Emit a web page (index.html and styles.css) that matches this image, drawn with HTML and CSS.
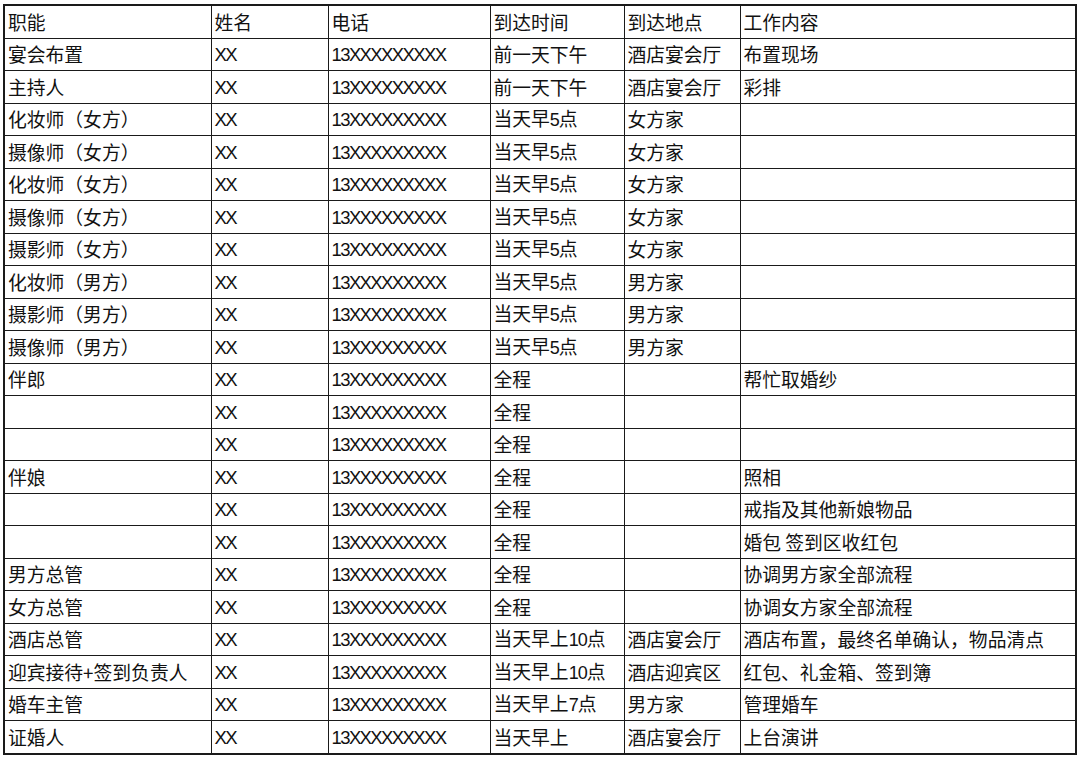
FILE: index.html
```html
<!DOCTYPE html>
<html lang="zh">
<head>
<meta charset="utf-8">
<title>婚礼人员安排</title>
<link rel="stylesheet" href="styles.css">
</head>
<body>
<table class="sheet">
  <colgroup>
    <col class="c1"><col class="c2"><col class="c3"><col class="c4"><col class="c5"><col class="c6">
  </colgroup>
  <tbody>
    <tr><td>职能</td><td>姓名</td><td>电话</td><td>到达时间</td><td>到达地点</td><td>工作内容</td></tr>
    <tr><td>宴会布置</td><td><span class="l">XX</span></td><td><span class="l">13XXXXXXXXX</span></td><td>前一天下午</td><td>酒店宴会厅</td><td>布置现场</td></tr>
    <tr><td>主持人</td><td><span class="l">XX</span></td><td><span class="l">13XXXXXXXXX</span></td><td>前一天下午</td><td>酒店宴会厅</td><td>彩排</td></tr>
    <tr><td>化妆师（女方）</td><td><span class="l">XX</span></td><td><span class="l">13XXXXXXXXX</span></td><td>当天早<span class="d">5</span>点</td><td>女方家</td><td></td></tr>
    <tr><td>摄像师（女方）</td><td><span class="l">XX</span></td><td><span class="l">13XXXXXXXXX</span></td><td>当天早<span class="d">5</span>点</td><td>女方家</td><td></td></tr>
    <tr><td>化妆师（女方）</td><td><span class="l">XX</span></td><td><span class="l">13XXXXXXXXX</span></td><td>当天早<span class="d">5</span>点</td><td>女方家</td><td></td></tr>
    <tr><td>摄像师（女方）</td><td><span class="l">XX</span></td><td><span class="l">13XXXXXXXXX</span></td><td>当天早<span class="d">5</span>点</td><td>女方家</td><td></td></tr>
    <tr><td>摄影师（女方）</td><td><span class="l">XX</span></td><td><span class="l">13XXXXXXXXX</span></td><td>当天早<span class="d">5</span>点</td><td>女方家</td><td></td></tr>
    <tr><td>化妆师（男方）</td><td><span class="l">XX</span></td><td><span class="l">13XXXXXXXXX</span></td><td>当天早<span class="d">5</span>点</td><td>男方家</td><td></td></tr>
    <tr><td>摄影师（男方）</td><td><span class="l">XX</span></td><td><span class="l">13XXXXXXXXX</span></td><td>当天早<span class="d">5</span>点</td><td>男方家</td><td></td></tr>
    <tr><td>摄像师（男方）</td><td><span class="l">XX</span></td><td><span class="l">13XXXXXXXXX</span></td><td>当天早<span class="d">5</span>点</td><td>男方家</td><td></td></tr>
    <tr><td>伴郎</td><td><span class="l">XX</span></td><td><span class="l">13XXXXXXXXX</span></td><td>全程</td><td></td><td>帮忙取婚纱</td></tr>
    <tr><td></td><td><span class="l">XX</span></td><td><span class="l">13XXXXXXXXX</span></td><td>全程</td><td></td><td></td></tr>
    <tr><td></td><td><span class="l">XX</span></td><td><span class="l">13XXXXXXXXX</span></td><td>全程</td><td></td><td></td></tr>
    <tr><td>伴娘</td><td><span class="l">XX</span></td><td><span class="l">13XXXXXXXXX</span></td><td>全程</td><td></td><td>照相</td></tr>
    <tr><td></td><td><span class="l">XX</span></td><td><span class="l">13XXXXXXXXX</span></td><td>全程</td><td></td><td>戒指及其他新娘物品</td></tr>
    <tr><td></td><td><span class="l">XX</span></td><td><span class="l">13XXXXXXXXX</span></td><td>全程</td><td></td><td>婚包 签到区收红包</td></tr>
    <tr><td>男方总管</td><td><span class="l">XX</span></td><td><span class="l">13XXXXXXXXX</span></td><td>全程</td><td></td><td>协调男方家全部流程</td></tr>
    <tr><td>女方总管</td><td><span class="l">XX</span></td><td><span class="l">13XXXXXXXXX</span></td><td>全程</td><td></td><td>协调女方家全部流程</td></tr>
    <tr><td>酒店总管</td><td><span class="l">XX</span></td><td><span class="l">13XXXXXXXXX</span></td><td>当天早上<span class="d">10</span>点</td><td>酒店宴会厅</td><td>酒店布置，最终名单确认，物品清点</td></tr>
    <tr><td>迎宾接待+签到负责人</td><td><span class="l">XX</span></td><td><span class="l">13XXXXXXXXX</span></td><td>当天早上<span class="d">10</span>点</td><td>酒店迎宾区</td><td>红包、礼金箱、签到簿</td></tr>
    <tr><td>婚车主管</td><td><span class="l">XX</span></td><td><span class="l">13XXXXXXXXX</span></td><td>当天早上<span class="d">7</span>点</td><td>男方家</td><td>管理婚车</td></tr>
    <tr><td>证婚人</td><td><span class="l">XX</span></td><td><span class="l">13XXXXXXXXX</span></td><td>当天早上</td><td>酒店宴会厅</td><td>上台演讲</td></tr>
  </tbody>
</table>
</body>
</html>
```

FILE: styles.css
```css
html, body {
  margin: 0;
  padding: 0;
  background: #ffffff;
}

body {
  padding: 4px 0 0 3px;
  font-family: "Noto Sans CJK SC", "Liberation Sans", sans-serif;
  font-size: 18.8px;
  color: #111111;
}

.sheet {
  border-collapse: collapse;
  table-layout: fixed;
  width: 1072px;
  border: 2px solid #1a1a1a;
}

.c1 { width: 207px; }
.c2 { width: 117px; }
.c3 { width: 162px; }
.c4 { width: 134px; }
.c5 { width: 116px; }
.c6 { width: 336px; }

.sheet td {
  height: 31.5px;
  padding: 0 2px 0 3px;
  border: 1px solid #1a1a1a;
  white-space: nowrap;
  overflow: hidden;
  vertical-align: middle;
  line-height: 20px;
}

.l {
  font-family: "Liberation Sans", sans-serif;
  font-size: 18.5px;
  letter-spacing: -1.6px;
}

.d {
  font-family: "Liberation Sans", sans-serif;
  font-size: 18px;
  letter-spacing: -1px;
}
```
